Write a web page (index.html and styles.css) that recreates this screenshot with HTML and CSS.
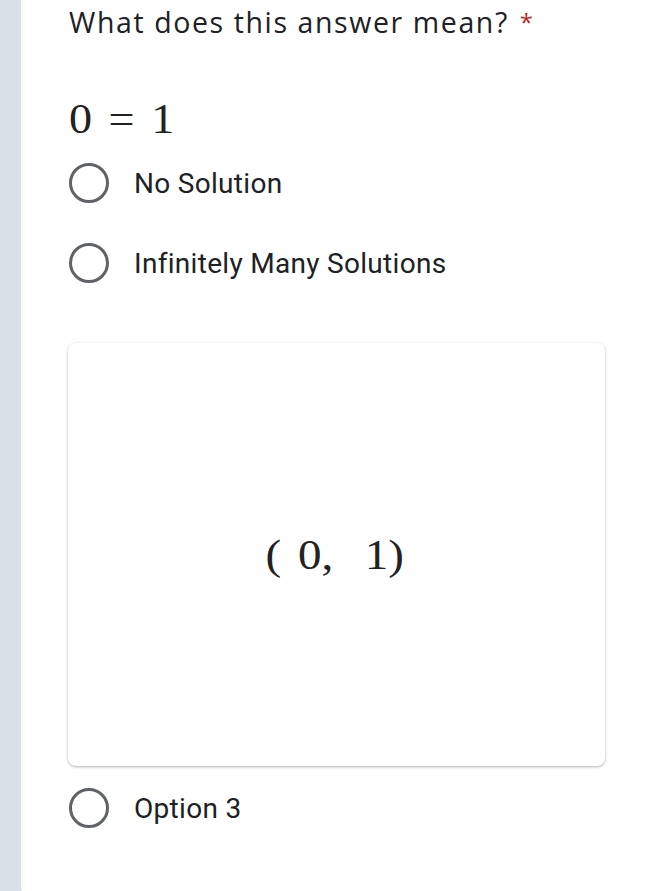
FILE: index.html
```html
<!DOCTYPE html>
<html lang="en">
<head>
  <meta charset="UTF-8" />
  <meta name="viewport" content="width=device-width, initial-scale=1.0" />
  <title>Question</title>
  <link rel="stylesheet" href="styles.css">
</head>
<body>
  <div class="card">
    <div class="question">What does this answer mean? <span class="req">*</span></div>
    <div class="equation"><span>0</span><span>=</span><span>1</span></div>

    <div class="option"><span class="radio"></span><span class="label">No Solution</span></div>
    <div class="option"><span class="radio"></span><span class="label">Infinitely Many Solutions</span></div>

    <div class="image-card">
      <div class="pair"><span class="paren">(</span><span class="zero">0,</span><span>1)</span></div>
    </div>

    <div class="option last"><span class="radio"></span><span class="label">Option 3</span></div>
  </div>
</body>
</html>
```

FILE: styles.css
```css
body {
  margin: 0;
  background: #d9e0e8;
  font-family: Roboto, 'Noto Sans', sans-serif;
  overflow: hidden;
  height: 891px;
}

.card {
  margin-left: 21px;
  background: #fff;
  min-height: 900px;
  padding: 0 0 0 48px;
  border-bottom-left-radius: 14px;
  box-sizing: border-box;
}

.question {
  padding-top: 2px;
  height: 42px;
  line-height: 40px;
  font-family: 'Open Sans', sans-serif;
  font-size: 28.5px;
  letter-spacing: 1.6px;
  color: #202124;
}

.req {
  color: #c5221f;
  font-size: 24px;
  margin-left: 2px;
  vertical-align: top;
}

.equation {
  display: flex;
  width: fit-content;
  gap: 15px;
  height: 55px;
  margin-top: 44px;
  align-items: flex-end;
  font-family: 'Liberation Serif', serif;
  font-size: 42px;
  color: #222;
  transform: scaleX(1.1);
  transform-origin: left;
}

.option {
  display: flex;
  align-items: center;
  height: 80px;
}

.radio {
  width: 40px;
  height: 40px;
  border: 3px solid #5f6368;
  border-radius: 50%;
  box-sizing: border-box;
  flex-shrink: 0;
}

.label {
  margin-left: 25px;
  font-size: 28px;
  letter-spacing: 0.3px;
  color: #202124;
}

.image-card {
  width: 537px;
  height: 423px;
  margin-top: 40px;
  margin-left: -1px;
  border-radius: 8px;
  box-shadow: 0 1px 3px rgba(0,0,0,0.3);
  display: flex;
  align-items: center;
  justify-content: center;
}

.pair {
  display: flex;
  font-family: 'Liberation Serif', serif;
  font-size: 42px;
  color: #222;
  margin-right: 4px;
  transform: scaleX(1.12);
}

.paren {
  margin-right: 15px;
}

.zero {
  margin-right: 28px;
}

.option.last {
  margin-top: 2px;
}
```
